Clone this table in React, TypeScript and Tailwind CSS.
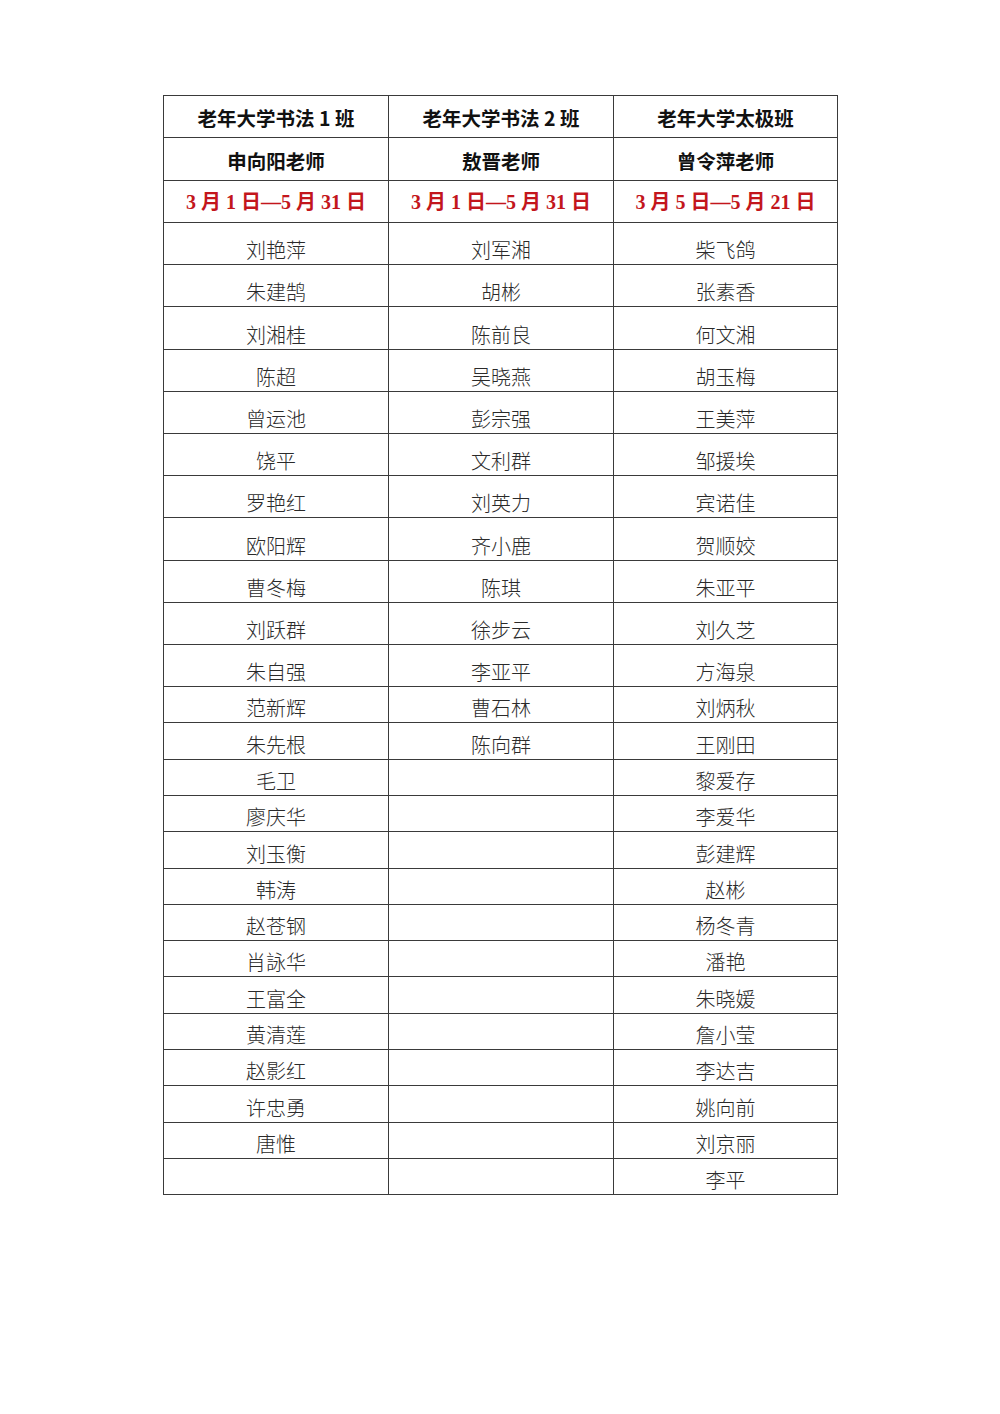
const headers = ['老年大学书法 1 班', '老年大学书法 2 班', '老年大学太极班']
const teachers = ['申向阳老师', '敖晋老师', '曾令萍老师']
const dates = [
  ['3', '1', '5', '31'],
  ['3', '1', '5', '31'],
  ['3', '5', '5', '21'],
]

const col1 = [
  '刘艳萍', '朱建鹄', '刘湘桂', '陈超', '曾运池', '饶平', '罗艳红', '欧阳辉', '曹冬梅', '刘跃群', '朱自强',
  '范新辉', '朱先根', '毛卫', '廖庆华', '刘玉衡', '韩涛', '赵苍钢', '肖詠华', '王富全', '黄清莲', '赵影红', '许忠勇', '唐惟', '',
]
const col2 = [
  '刘军湘', '胡彬', '陈前良', '吴晓燕', '彭宗强', '文利群', '刘英力', '齐小鹿', '陈琪', '徐步云', '李亚平',
  '曹石林', '陈向群',
]
const col3 = [
  '柴飞鸽', '张素香', '何文湘', '胡玉梅', '王美萍', '邹援埃', '宾诺佳', '贺顺姣', '朱亚平', '刘久芝', '方海泉',
  '刘炳秋', '王刚田', '黎爱存', '李爱华', '彭建辉', '赵彬', '杨冬青', '潘艳', '朱晓媛', '詹小莹', '李达吉', '姚向前', '刘京丽', '李平',
]

const cell = 'border border-[#3a3a3a] p-0 text-center'

export default function App() {
  return (
    <div className="min-h-[1414px] w-[1000px] bg-white pt-[95px]">
      <table className="mx-auto ml-[163px] w-[674px] table-fixed border-collapse">
        <colgroup>
          <col className="w-[225px]" />
          <col className="w-[225px]" />
          <col className="w-[224px]" />
        </colgroup>
        <tbody>
          {/* Class names */}
          <tr className="h-[42px]">
            {headers.map((h) => (
              <td
                key={h}
                className={`${cell} pt-[3px] text-[19.5px] font-bold text-[#111] [font-family:'Noto_Sans_CJK_SC',sans-serif]`}
              >
                {h}
              </td>
            ))}
          </tr>
          {/* Teachers */}
          <tr className="h-[43px]">
            {teachers.map((t) => (
              <td
                key={t}
                className={`${cell} pt-[3px] text-[19.5px] font-bold text-[#111] [font-family:'Noto_Sans_CJK_SC',sans-serif]`}
              >
                {t}
              </td>
            ))}
          </tr>
          {/* Dates */}
          <tr className="h-[42px]">
            {dates.map((d, i) => (
              <td
                key={i}
                className={`${cell} text-[20px] font-bold text-[#c3161c] [font-family:'Liberation_Serif','Noto_Sans_CJK_SC',serif]`}
              >
                {d[0]} 月 {d[1]} 日—{d[2]} 月 {d[3]} 日
              </td>
            ))}
          </tr>
          {/* Names */}
          {col3.map((_, i) => (
            <tr key={i} className={i < 11 ? 'h-[42.2px]' : 'h-[36.3px]'}>
              {[col1[i] ?? '', col2[i] ?? '', col3[i] ?? ''].map((n, j) => (
                <td
                  key={j}
                  className={`${cell} pb-[2px] align-bottom text-[20px] leading-[24px] font-light text-[#2a2a2a] [font-family:'Noto_Sans_CJK_SC',sans-serif]`}
                >
                  {n}
                </td>
              ))}
            </tr>
          ))}
        </tbody>
      </table>
    </div>
  )
}
